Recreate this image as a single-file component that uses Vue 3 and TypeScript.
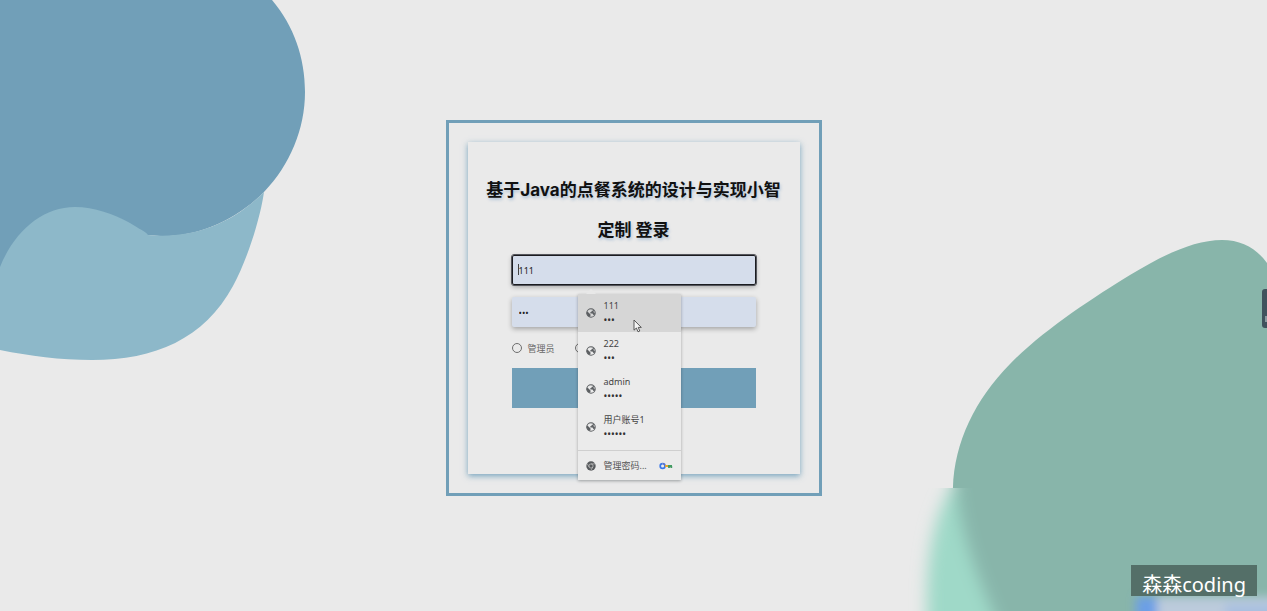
<script setup lang="ts">
import { ref } from 'vue'

interface Account {
  name: string
  mask: string
}

const username = ref('111')
const password = ref('111')
const role = ref('')
const active = ref(0)

const accounts: Account[] = [
  { name: '111', mask: '•••' },
  { name: '222', mask: '•••' },
  { name: 'admin', mask: '•••••' },
  { name: '用户账号1', mask: '••••••' },
]

function choose(index: number) {
  active.value = index
  username.value = accounts[index].name
}
</script>

<template>
  <main class="page">
    <svg class="blob blob-left" width="320" height="370" viewBox="0 0 320 370" aria-hidden="true">
      <path
        d="M0 0H272C294 26 305 58 305 92C305 129 290 165 264 192C236 220 199 237 160 236L148 235L60 300L0 300Z"
        fill="#719fb8"
      />
      <path
        d="M0 267C14 232 42 207 75 207C94 207 114 214 130 223C139 229 145 231 148 235C193 239 232 224 264 192C260 220 247 260 233 286C204 339 155 360 92 360C60 360 30 356 0 350Z"
        fill="#8db8c9"
      />
    </svg>

    <svg class="blob blob-right" width="367" height="391" viewBox="0 0 367 391" aria-hidden="true">
      <defs>
        <filter id="soft" x="-20%" y="-20%" width="140%" height="140%">
          <feGaussianBlur stdDeviation="8" />
        </filter>
        <filter id="soft-small" x="-20%" y="-100%" width="140%" height="300%">
          <feGaussianBlur stdDeviation="5" />
        </filter>
        <clipPath id="lower"><rect x="0" y="268" width="367" height="123" /></clipPath>
        <clipPath id="upper"><rect x="0" y="0" width="367" height="268" /></clipPath>
      </defs>
      <path
        clip-path="url(#upper)"
        d="M53 280C51 229 72 183 110 144C142 111 194 77 230 55C263 35 294 20 322 20C342 20 357 29 367 43V280Z"
        fill="#88b5aa"
      />
      <g clip-path="url(#lower)">
        <g filter="url(#soft)">
          <path d="M55 260C35 294 23 333 28 420H140V260Z" fill="#9fd9c8" />
          <path d="M55 230C53 298 70 344 109 430H410V230Z" fill="#88b5aa" />
        </g>
        <g filter="url(#soft-small)">
          <path d="M238 377H400V430H238Z" fill="#bccbdc" />
          <path d="M236 377H257V430H236Z" fill="#6c9fe6" />
          <path d="M325 384H400V430H325Z" fill="#a9c0e0" />
        </g>
      </g>
    </svg>

    <section class="frame">
      <form class="card" @submit.prevent>
        <h1 class="title">基于Java的点餐系统的设计与实现小智定制 登录</h1>

        <div class="fields">
          <div class="field field-user">
            <input v-model="username" class="input focused" type="text" aria-label="账号" />
            <span class="caret"></span>

            <div class="suggest">
              <ul class="accounts">
                <li v-for="(account, index) in accounts" :key="account.name">
                  <button
                    type="button"
                    class="account"
                    :class="{ active: index === active }"
                    @click="choose(index)"
                  >
                    <svg class="globe" width="10" height="10" viewBox="0 0 20 20" aria-hidden="true">
                      <circle cx="10" cy="10" r="8.4" fill="none" stroke="#5c5f62" stroke-width="2.2" />
                      <path
                        d="M2 7L5 9L9 13V15L8 18L4 16L1 11ZM7 2L14 3V5L11 6V8L8 9L9 11H13L15 14H17L18 11L15 8L16 4Z"
                        fill="#5c5f62"
                      />
                    </svg>
                    <span class="account-text">
                      <span class="name">{{ account.name }}</span>
                      <span class="mask">{{ account.mask }}</span>
                    </span>
                  </button>
                </li>
              </ul>
              <button type="button" class="manage">
                <svg width="10" height="10" viewBox="0 0 20 20" aria-hidden="true">
                  <circle cx="10" cy="10" r="9.4" fill="#56595c" />
                  <circle cx="10" cy="10" r="4.2" fill="none" stroke="#c4c4c4" stroke-width="1.5" />
                  <path d="M10 5.8H18M6.4 12L2.4 5.4M13.6 12L9.6 19" stroke="#c4c4c4" stroke-width="1.4" />
                </svg>
                <span class="manage-text">管理密码...</span>
                <svg class="key" width="14" height="8" viewBox="0 0 14 8" fill="none" aria-hidden="true">
                  <path d="M6 4A2.4 2.4 0 1 1 3.6 1.6" stroke="#3b78e7" stroke-width="1.7" />
                  <path d="M3.6 1.6A2.4 2.4 0 0 1 6 4" stroke="#5673cf" stroke-width="1.7" />
                  <path d="M6 4H9" stroke="#e5a62d" stroke-width="2" />
                  <path d="M9 4H13M10 4V6M12.3 4V6" stroke="#439b62" stroke-width="1.8" />
                </svg>
              </button>

              <svg class="pointer" width="9" height="14" viewBox="0 0 9 14" aria-hidden="true">
                <path
                  d="M1 1V11.2L3.4 9L5 12.8L6.8 12L5.2 8.4H8.3Z"
                  fill="#f4f4f4"
                  stroke="#4b4b4b"
                  stroke-width="0.9"
                />
              </svg>
            </div>
          </div>

          <div class="field">
            <input v-model="password" class="input" type="password" aria-label="密码" />
          </div>

          <div class="roles">
            <label class="role"><input v-model="role" type="radio" name="role" value="admin" />管理员</label>
            <label class="role"><input v-model="role" type="radio" name="role" value="user" aria-label="用户" /></label>
          </div>

          <button type="submit" class="submit" aria-label="登录"></button>
        </div>
      </form>
    </section>

    <div class="side-tab"><span></span></div>
    <div class="watermark">森森coding</div>
  </main>
</template>

<style>
body {
  margin: 0;
}
</style>

<style scoped>
.page {
  position: relative;
  box-sizing: border-box;
  min-height: 100vh;
  padding: 120px 24px 96px;
  display: flex;
  justify-content: center;
  align-items: flex-start;
  overflow: hidden;
  background: #eaeaea;
  font-family: 'Noto Sans', 'Noto Sans CJK SC', sans-serif;
  color: #111;
}

.page button,
.page input {
  font-family: inherit;
}

.blob {
  position: absolute;
  display: block;
}

.blob-left {
  left: 0;
  top: 0;
}

.blob-right {
  right: 0;
  bottom: 0;
}

.frame {
  position: relative;
  box-sizing: border-box;
  width: 376px;
  max-width: 100%;
  padding: 19px;
  border: 3px solid #719fb8;
}

.card {
  box-sizing: border-box;
  min-height: 332px;
  padding: 28px 16px 24px;
  background: #eaeaea;
  box-shadow: 0 2px 6px rgba(80, 140, 175, 0.75);
}

.title {
  margin: 0;
  font-family: Inter, 'Noto Sans CJK SC', sans-serif;
  font-size: 17px;
  line-height: 40px;
  font-weight: 700;
  text-align: center;
  text-shadow: 1px 2px 3px rgba(90, 140, 190, 0.4);
}

.fields {
  margin: 5px 28px 0;
  display: flex;
  flex-direction: column;
}

.field {
  position: relative;
  display: flex;
  margin-bottom: 12px;
}

.input {
  box-sizing: border-box;
  width: 100%;
  height: 30px;
  padding: 0 7px;
  border: 0;
  border-radius: 2px;
  outline: 0;
  background: #d5ddeb;
  box-shadow: 0 2px 5px rgba(0, 0, 0, 0.3);
  color: #222;
  font-size: 9px;
}

.input.focused {
  padding: 0 6px;
  border: 1px solid #1b1c20;
  outline: 1px solid #55565c;
  outline-offset: 0;
  border-radius: 2px;
}

.field-user {
  z-index: 2;
}

.caret {
  position: absolute;
  left: 6px;
  top: 9px;
  width: 1px;
  height: 11px;
  background: #444;
}

.roles {
  display: flex;
  align-items: center;
  gap: 20px;
  height: 18px;
  margin-bottom: 11px;
}

.role {
  display: flex;
  align-items: center;
  gap: 6px;
  font-size: 9px;
  color: #666;
}

.role input {
  appearance: none;
  box-sizing: border-box;
  width: 10px;
  height: 10px;
  margin: 0;
  border: 1px solid #6e6e6e;
  border-radius: 50%;
}

.role input:checked {
  background: #719fb8;
}

.submit {
  height: 40px;
  padding: 0;
  border: 0;
  background: #719fb8;
}

.suggest {
  position: absolute;
  left: 66px;
  top: 39px;
  width: 103px;
  background: #ebebeb;
  box-shadow: 0 1px 3px rgba(0, 0, 0, 0.3);
}

.suggest::before {
  content: '';
  position: absolute;
  left: 8px;
  top: -5px;
  border: 5px solid transparent;
  border-top: 0;
  border-bottom-color: #e8e8e8;
}

.accounts {
  margin: 0;
  padding: 0 0 4px;
  list-style: none;
}

.account {
  display: flex;
  align-items: center;
  gap: 8px;
  width: 100%;
  height: 38px;
  padding: 0 8px;
  border: 0;
  background: transparent;
  color: #444;
  text-align: left;
}

.account.active {
  background: #d6d6d6;
}

.account-text {
  display: flex;
  flex-direction: column;
  font-size: 9px;
  line-height: 14px;
}

.mask {
  color: #333;
  font-size: 10px;
}

.manage {
  display: flex;
  align-items: center;
  gap: 8px;
  width: 100%;
  height: 30px;
  padding: 0 8px;
  border: 0;
  border-top: 1px solid #cfcfcf;
  background: transparent;
  color: #555;
  font-size: 9px;
}

.manage-text {
  flex: 1;
  text-align: left;
  white-space: nowrap;
}

.pointer {
  position: absolute;
  left: 55px;
  top: 25px;
}

.side-tab {
  position: absolute;
  right: 0;
  top: 289px;
  width: 5px;
  height: 39px;
  border-radius: 3px 0 0 3px;
  background: #40535d;
}

.side-tab span {
  position: absolute;
  right: 0;
  bottom: 6px;
  width: 2px;
  height: 6px;
  background: #8a9aa0;
}

.watermark {
  position: absolute;
  right: 10px;
  bottom: 15px;
  box-sizing: border-box;
  height: 31px;
  padding: 0 11px;
  background: #546f68;
  color: #fff;
  font-size: 20px;
  line-height: 40px;
}
</style>
